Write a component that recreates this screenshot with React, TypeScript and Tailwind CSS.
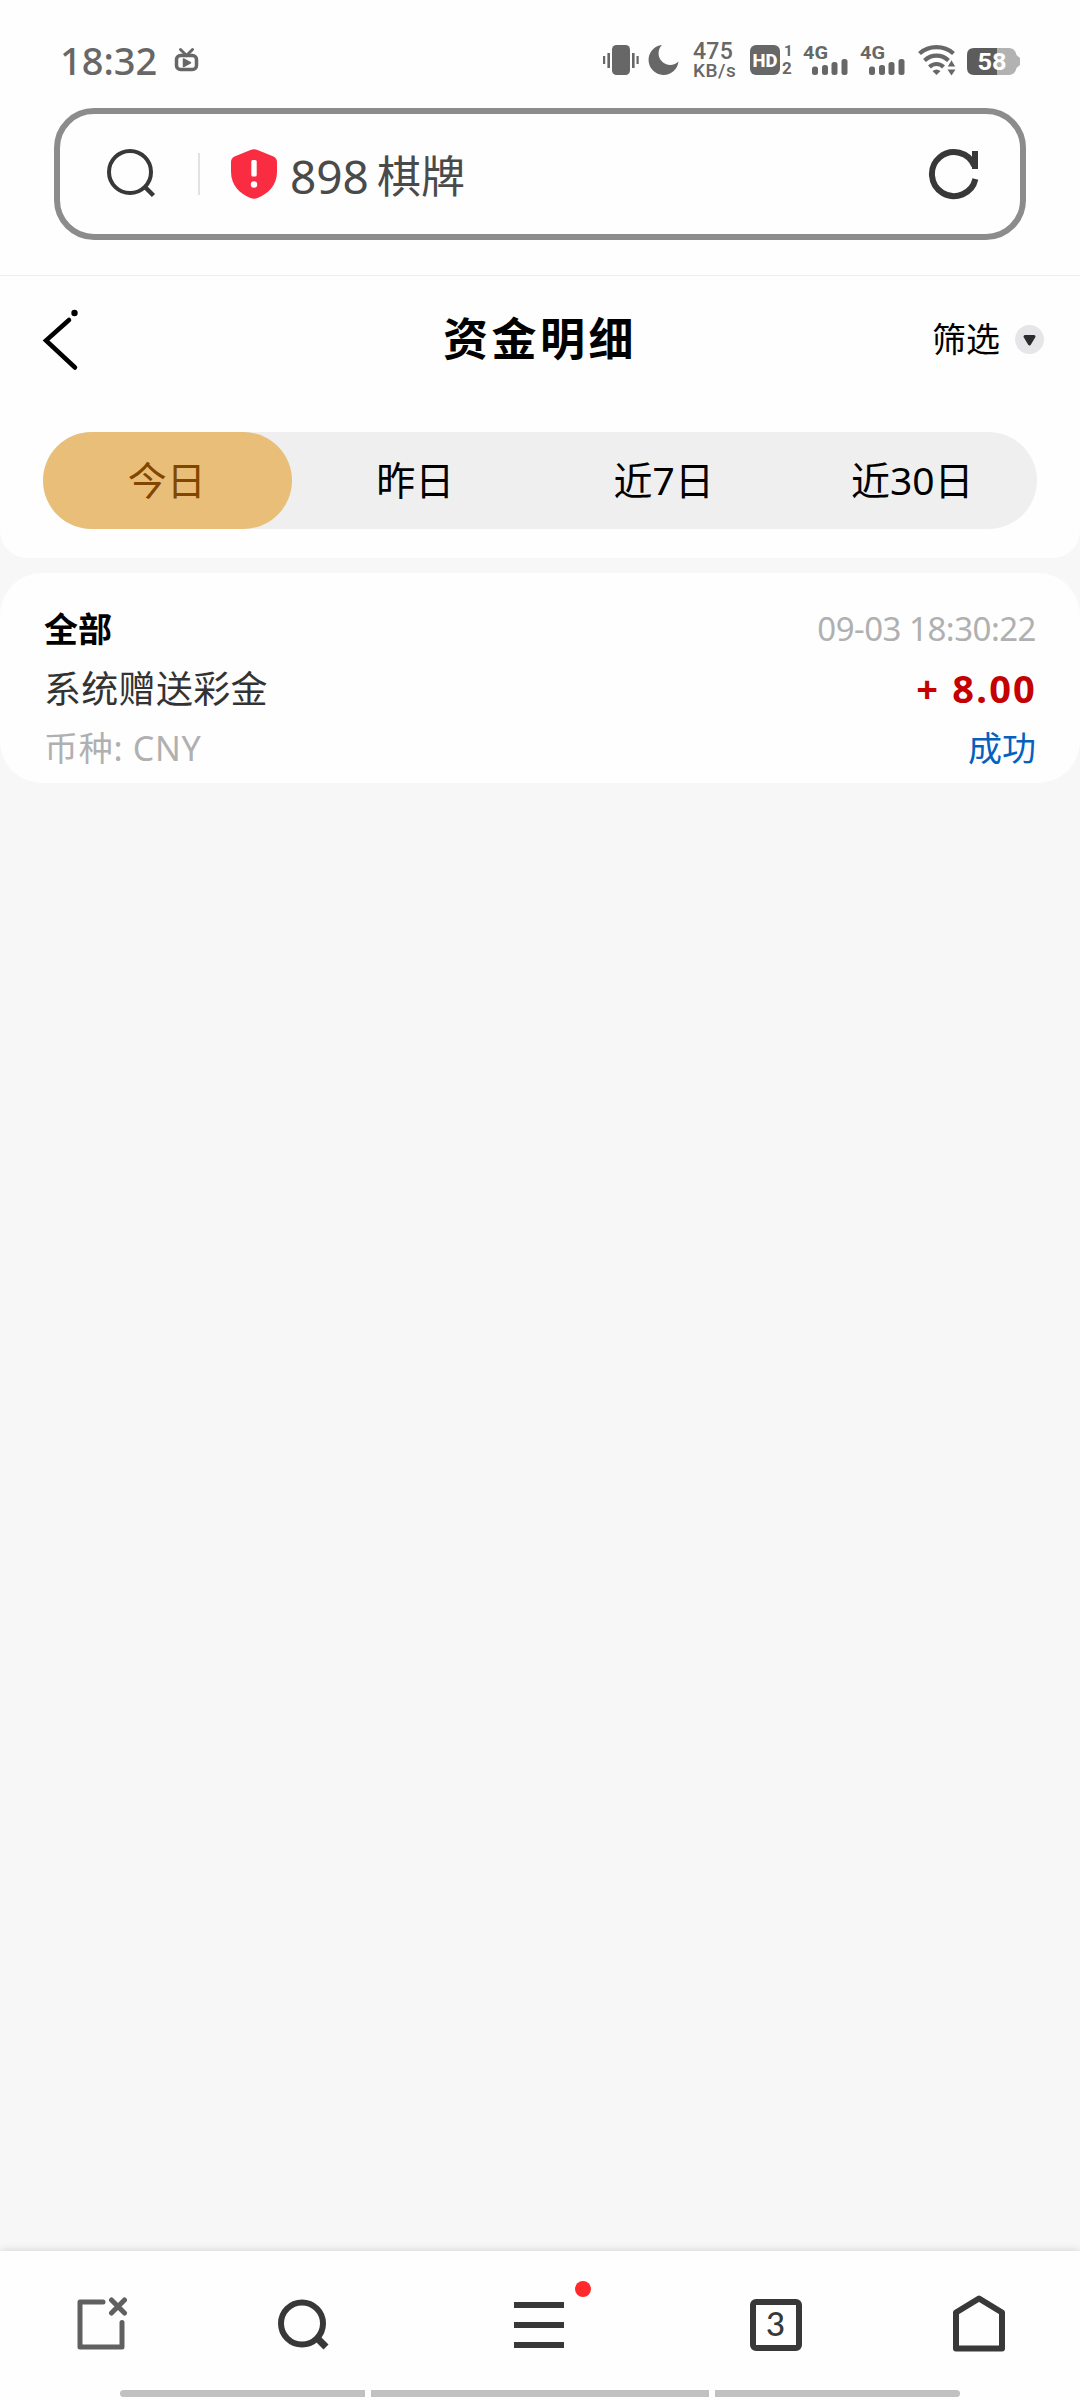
import type { ReactNode } from "react"
import clsx from "clsx"

const tabs = ["今日", "昨日", "近7日", "近30日"]

function SignalIcon() {
  return (
    <svg width="46" height="32" viewBox="0 0 46 32" className="shrink-0 overflow-visible fill-[#676767] font-[Roboto]">
      <text x="0" y="14" fontSize="19" fontWeight="700" textLength="25" lengthAdjust="spacingAndGlyphs">
        4G
      </text>
      <rect x="9" y="21.5" width="6" height="8.5" rx="2.5" />
      <rect x="19" y="20" width="6" height="10" rx="2.5" />
      <rect x="28.500" y="17" width="6" height="13" rx="2.5" />
      <rect x="38.500" y="14" width="6" height="16" rx="2.5" />
    </svg>
  )
}

function StatusBar() {
  return (
    <div className="h-[108px] flex items-start pl-[60px] pt-[30px] text-[#676767]">
      <div className="h-[60px] w-[102px] flex items-center">
        <span className="text-[38px] leading-none font-medium">18:32</span>
      </div>
      <svg width="26" height="26" viewBox="0 0 26 26" className="ml-[12px] mt-[17px]">
        <rect x="2.500" y="8.500" width="20" height="14" rx="4" fill="none" stroke="currentColor" strokeWidth="3.500" />
        <path d="M6.500 2.500l6 6 6-6" fill="none" stroke="currentColor" strokeWidth="3" strokeLinecap="round" />
        <path d="M9.500 12v7.500l7-3.750z" fill="currentColor" stroke="currentColor" strokeWidth="1.500" strokeLinejoin="round" />
      </svg>

      <div className="flex-1" />

      <div className="flex h-[60px] items-start w-[478px]">
        {/* vibrate */}
        <svg width="37" height="32" viewBox="0 0 37 32" className="mt-[14px] shrink-0" fill="currentColor">
          <rect x="10" y="1" width="18" height="30" rx="4.500" />
          <path d="M1 12h2.200v8H1zM5.400 9h2.600v15H5.400zM30 9h2.600v15H30zM34.500 12h2.200v8h-2.200z" />
        </svg>
        {/* do not disturb */}
        <svg width="31" height="32" viewBox="0 0 31 32" className="ml-[9px] mt-[14px] shrink-0" fill="currentColor">
          <path d="M14 1A15 15 0 1 0 30.500 17.500A11.500 11.500 0 0 1 14 1z" />
        </svg>
        <div className="ml-[14px] mt-[12px] w-[44px] shrink-0 flex flex-col font-[Roboto] font-medium">
          <span className="h-[20px] text-[23px] leading-[20px] tracking-[0.3px]">475</span>
          <span className="h-[18px] text-[19px] leading-[18px] tracking-[0.5px]">KB/s</span>
        </div>
        <svg width="44" height="34" viewBox="0 0 44 34" className="ml-[13px] mt-[14px] shrink-0 overflow-visible font-[Roboto]" fill="currentColor">
          <rect x="0" y="1" width="30" height="30" rx="6" />
          <text x="2.500" y="22.500" fontSize="19" fontWeight="800" fill="#fff" textLength="25" lengthAdjust="spacingAndGlyphs">
            HD
          </text>
          <text x="34" y="12" fontSize="15" fontWeight="700">
            1
          </text>
          <text x="32" y="30" fontSize="17" fontWeight="700">
            2
          </text>
        </svg>
        <div className="ml-[9px] mt-[15px] flex gap-[11px]">
          <SignalIcon />
          <SignalIcon />
        </div>
        {/* wifi */}
        <svg width="38" height="32" viewBox="0 0 38 32" className="ml-[12px] mt-[15px] shrink-0" fill="currentColor">
          <g fill="none" stroke="currentColor" strokeWidth="4.200">
            <path d="M1.500 8.500C11 0 26 0 35.500 8.500" />
            <path d="M6.500 15.500C13.500 9 23.500 9 30.500 15.500" />
            <path d="M11.500 22C15.500 18 21.500 18 25.500 22" />
          </g>
          <path d="M14.500 26Q18.500 23 22.500 26L18.500 30z" />
          <path d="M33.500 14.500l4.500 7.500h-9z" stroke="#fff" strokeWidth="1" />
          <path d="M33.500 30.500l4-6h-8z" />
        </svg>
        {/* battery */}
        <svg width="56" height="30" viewBox="0 0 56 30" className="ml-[10px] mt-[17px] shrink-0 font-[Roboto]">
          <path d="M8 1H31V28H8Q1 28 1 21V8Q1 1 8 1z" fill="#5c5c5c" />
          <path d="M31 1H43Q49 1 50.500 8L54 11V18L50.500 21Q49 28 43 28H31z" fill="#b2b2b2" />
          <text x="11.500" y="23" fontSize="24" fontWeight="700" fill="#fff" textLength="29" lengthAdjust="spacingAndGlyphs">
            58
          </text>
        </svg>
      </div>
    </div>
  )
}

function AddressBar() {
  return (
    <div className="mx-[54px] h-[132px] rounded-[40px] border-[6px] border-[#8c8c8c] flex items-center pl-[46px] pr-[40px]">
      <svg width="50" height="50" viewBox="0 0 50 50" fill="none" stroke="#383838" strokeWidth="4">
        <circle cx="24" cy="23" r="21" />
        <path d="M39 38l8.500 8.500" strokeWidth="4.500" />
      </svg>
      <div className="ml-[42px] w-[2px] h-[42px] bg-[#e2e2e2]" />
      <svg width="48" height="52" viewBox="0 0 48 52" className="ml-[30px]">
        <path
          d="M20.500 2Q24 .3 27.500 2L43.500 8.500Q47 10 47 14V24C47 37 38 46 27.500 50Q24 51.300 20.500 50C10 46 1 37 1 24V14Q1 10 4.500 8.500z"
          fill="#fa2c41"
        />
        <rect x="21.300" y="12" width="5.400" height="16.500" rx="1.500" fill="#fff" />
        <circle cx="24" cy="36.500" r="3.200" fill="#fff" />
      </svg>
      <div className="ml-[12px] mt-[3px] flex items-center text-[#4a4a4a]">
        <span className="text-[46px] leading-none font-normal">898</span>
        <span className="ml-[8px] text-[44px] leading-none font-normal">棋牌</span>
      </div>
      <svg width="52" height="54" viewBox="0 0 52 54" className="ml-auto" fill="none" stroke="#383838" strokeWidth="6">
        <path d="M47.400 32A22 22 0 1 1 46.400 19" />
        <path d="M47 4v18" />
      </svg>
    </div>
  )
}

function RecordRow({ left, right }: { left: ReactNode; right: ReactNode }) {
  return (
    <div className="h-[60px] flex items-center justify-between">
      {left}
      {right}
    </div>
  )
}

function BottomNav() {
  return (
    <nav className="h-[149px] bg-[#fefefe] shadow-[0_-1px_8px_rgba(0,0,0,0.13)]">
      <div className="h-[139px] flex items-center pt-[9px] pl-[75px]">
        <svg width="54" height="56" viewBox="0 0 54 56" fill="none" stroke="#606060" strokeWidth="5" strokeLinecap="round" strokeLinejoin="round">
          <path d="M28 5H5V50H47V25.500" />
          <path d="M36.500 3l13 13M49.500 3l-13 13" />
        </svg>
        <svg width="54" height="56" viewBox="0 0 54 56" className="ml-[147px]" fill="none" stroke="#383838" strokeWidth="6">
          <circle cx="26" cy="26.500" r="21" />
          <path d="M40 40l10 10" strokeWidth="7" />
        </svg>
        <div className="relative w-[50px] ml-[184px] flex flex-col gap-[14px]">
          <div className="h-[6px] bg-[#383838]" />
          <div className="h-[6px] bg-[#383838]" />
          <div className="h-[6px] bg-[#383838]" />
          <span className="absolute left-[61px] top-[-21px] size-4 rounded-full bg-[#ff2a2a]" />
        </div>
        <div className="ml-[186px] size-[52px] rounded-[6px] border-[6px] border-[#383838] flex items-center justify-center pb-[3px] pr-px text-[#383838] font-[Lato] text-[33px] leading-none font-medium">
          3
        </div>
        <svg width="56" height="62" viewBox="0 0 56 62" className="ml-[149px]" fill="none" stroke="#383838" strokeWidth="6" strokeLinejoin="round">
          <path d="M5 18.500L28 4.500L51 18.500V54.500H5z" />
        </svg>
      </div>
      <div className="h-[7px] mx-[120px] flex gap-[6px]">
        <div className="w-[245px] rounded-l-full bg-[#c1c1c1]" />
        <div className="flex-1 bg-[#c1c1c1]" />
        <div className="w-[245px] rounded-r-full bg-[#c1c1c1]" />
      </div>
    </nav>
  )
}

export default function App() {
  return (
    <div className="w-[1080px] h-[2400px] flex flex-col overflow-hidden bg-[#f7f7f7] font-['Noto_Sans','Noto_Sans_CJK_SC',sans-serif]">
      <div className="h-[558px] bg-[#fefefe] rounded-b-[27px]">
        <StatusBar />
        <AddressBar />
        <div className="mt-[35px] h-px bg-[#eeeeee]" />

        <header className="h-[156px] grid grid-cols-[1fr_auto_1fr] items-start pl-[36px] pr-[36px]">
          <svg width="38" height="64" viewBox="0 0 38 64" className="ml-[6px] mt-[32px]" fill="none" stroke="#000" strokeWidth="4.500" strokeLinecap="round">
            <path d="M27 12L4 32.500L33 59.500" />
            <circle cx="32.500" cy="5" r="3.200" fill="#000" stroke="none" />
          </svg>
          <h1 className="mt-[36px] text-[45px] leading-[54px] font-semibold tracking-[3.500px] text-black">资金明细</h1>
          <div className="mt-[38px] flex items-center justify-end">
            <span className="text-[34px] leading-[50px] text-black">筛选</span>
            <svg width="29" height="29" viewBox="0 0 29 29" className="ml-[15px]">
              <circle cx="14.500" cy="14.500" r="14.500" fill="#e6e6e8" />
              <path d="M10 11.500h9l-4.500 7.500z" fill="#2c2c2c" stroke="#2c2c2c" strokeWidth="3" strokeLinejoin="round" />
            </svg>
          </div>
        </header>

        <div className="mx-[43px] h-[97px] rounded-full bg-[#efefef] grid grid-cols-4">
          {tabs.map((tab, i) => (
            <button
              key={tab}
              className={clsx(
                "rounded-full pb-[2px] pr-px text-[39px] leading-none",
                i === 0 ? "bg-[#e9be79] text-[#824600]" : "text-black"
              )}
            >
              {tab}
            </button>
          ))}
        </div>
      </div>

      <div className="mt-[15px] h-[210px] bg-[#fefefe] rounded-[42px] pt-[25px] px-[44px]">
        <RecordRow
          left={<span className="mt-[2px] text-[34px] leading-none font-bold text-black">全部</span>}
          right={<span className="text-[33px] leading-none text-[#b0b0b0] tracking-[-0.500px]">09-03 18:30:22</span>}
        />
        <RecordRow
          left={<span className="text-[37px] leading-none tracking-[0.300px] text-[#333]">系统赠送彩金</span>}
          right={<span className="mr-[-1px] text-[38px] leading-none font-bold tracking-[2.200px] text-[#c40000]">+ 8.00</span>}
        />
        <RecordRow
          left={<span className="text-[34px] leading-none tracking-[0.700px] text-[#b0b0b0]">币种: CNY</span>}
          right={<span className="text-[34px] leading-none text-[#0560bf]">成功</span>}
        />
      </div>

      <div className="flex-1" />
      <BottomNav />
    </div>
  )
}
